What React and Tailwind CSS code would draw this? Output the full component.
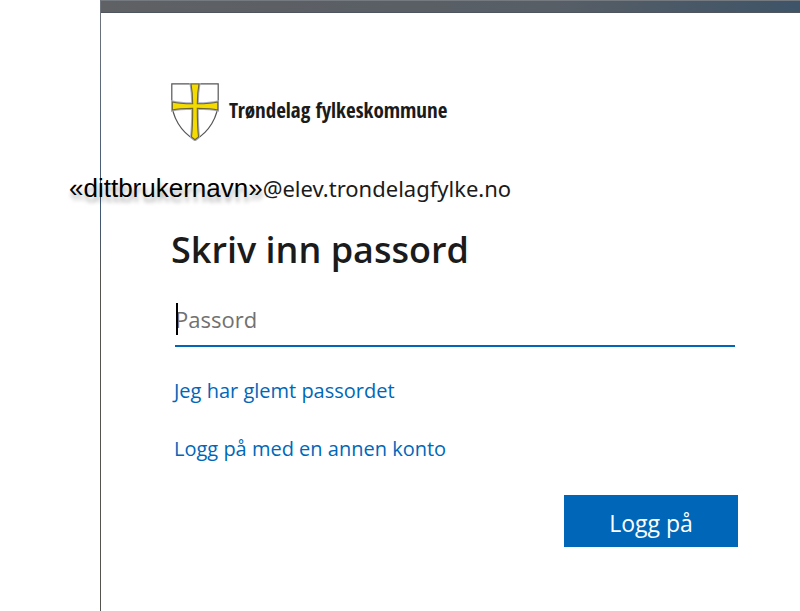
import React, { useState } from "react";

function ShieldLogo() {
  return (
    <svg
      viewBox="0 0 48 58"
      className="h-[58px] w-12 shrink-0"
      role="img"
      aria-label="Fylkesvåpen"
    >
      <path
        d="M.8.8H47.2V18C47.2 34 38 49 24 57C10 49 .8 34 .8 18Z"
        fill="#fff"
        stroke="#555"
        strokeWidth="1.2"
      />
      <path
        d="M20 1H28C26.8 7 26.3 14 26.3 20.8C33 20.8 41 20.5 46.8 19V27C41 25.5 33 25.3 26.3 25.3C26.3 34 26.3 44 27.5 54L24 56.8L20.5 54C21.7 44 21.7 34 21.7 25.3C15 25.3 7 25.5 1.4 27V19C7 20.5 15 20.8 21.7 20.8C21.7 14 21.2 7 20 1Z"
        fill="none"
        stroke="#a9adcb"
        strokeWidth="3"
      />
      <path
        d="M20 1H28C26.8 7 26.3 14 26.3 20.8C33 20.8 41 20.5 46.8 19V27C41 25.5 33 25.3 26.3 25.3C26.3 34 26.3 44 27.5 54L24 56.8L20.5 54C21.7 44 21.7 34 21.7 25.3C15 25.3 7 25.5 1.4 27V19C7 20.5 15 20.8 21.7 20.8C21.7 14 21.2 7 20 1Z"
        fill="#f5dc00"
        stroke="#6b6530"
        strokeWidth="1.1"
      />
    </svg>
  );
}

function App() {
  const [password, setPassword] = useState("");

  return (
    <div className="flex min-h-screen bg-white pl-[12.5%] font-['Open_Sans','Noto_Sans',sans-serif] text-[#1b1b1b]">
      <div className="w-px shrink-0 bg-linear-to-b from-[#70757c] via-[#3f5874] via-35% to-[#55534f] to-45%" />
      <main className="min-w-0 flex-1">
        <div className="h-[13px] border-y border-t-[#747a80] border-b-[#4e555e] bg-linear-to-r from-[#5f6164] via-[#575e66] via-65% to-[#3e5468]" />

        <div className="pt-[70px] pr-[62px] pl-[70px]">
          <div className="flex items-center gap-2.5">
            <ShieldLogo />
            <span className="pb-1 font-['Noto_Sans_ExtraCondensed','Open_Sans_Condensed','Roboto_Condensed',sans-serif] text-[21px] leading-8 font-bold">
              Trøndelag fylkeskommune
            </span>
          </div>

          {/* Brukernavnet stikker ut over venstre kant */}
          <p className="mt-[31px] -ml-[102px] flex items-baseline text-[22px] leading-8 whitespace-nowrap">
            <span className="font-['Liberation_Sans',sans-serif] text-[26px] text-black text-shadow-[1px_5px_4px_rgb(0_0_0/0.3)]">
              «dittbrukernavn»
            </span>
            <span className="font-['Noto_Sans',sans-serif]">
              @elev.trondelagfylke.no
            </span>
          </p>

          <form onSubmit={(e) => e.preventDefault()}>
            <h1 className="mt-[22px] text-[36px] leading-12 font-semibold">
              Skriv inn passord
            </h1>

            <div className="relative mt-[27px] mr-[3px] ml-1">
              <input
                type="password"
                aria-label="Passord"
                placeholder="Passord"
                value={password}
                onChange={(e) => setPassword(e.target.value)}
                className="block h-[46px] w-full border-b-2 border-[#0067b8] pb-2 text-[22px] outline-none placeholder:text-[#717171]"
              />
              <span className="absolute top-0.5 left-px h-8 w-0.5 bg-black" />
            </div>

            <div className="mt-[30px] ml-[3px] flex flex-col items-start gap-[30px] text-[20px] leading-7 text-[#0067b8]">
              <a href="#glemt">Jeg har glemt passordet</a>
              <a href="#konto">Logg på med en annen konto</a>
            </div>

            <div className="mt-8 flex justify-end">
              <button
                type="submit"
                className="h-[52px] w-[174px] bg-[#0067b8] pt-1 text-[23px] text-white"
              >
                Logg på
              </button>
            </div>
          </form>
        </div>
      </main>
    </div>
  );
}

export default App;
